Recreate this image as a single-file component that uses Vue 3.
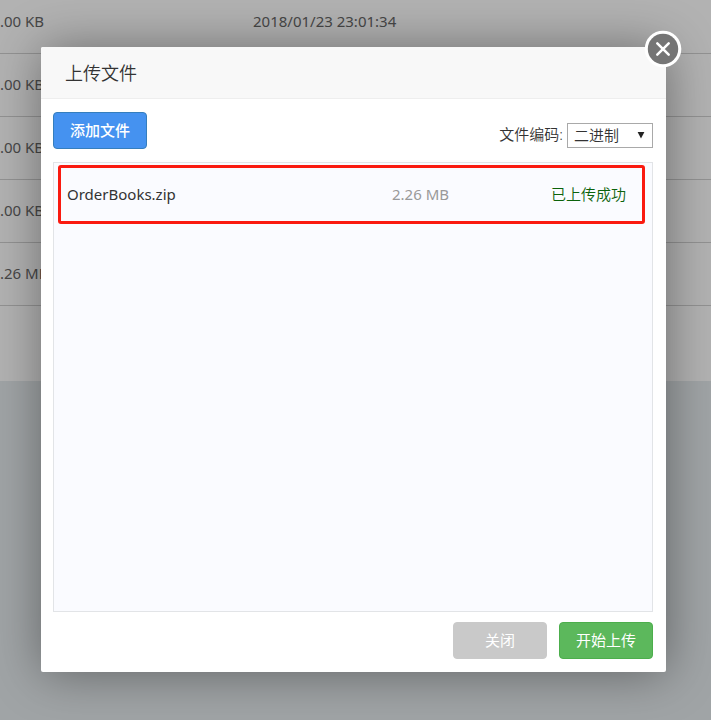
<script setup>
import { ref } from 'vue'

const rows = [
  { size: '.00 KB', time: '2018/01/23 23:01:34' },
  { size: '.00 KB', time: '2018/01/23 23:01:34' },
  { size: '.00 KB', time: '2018/01/23 23:01:34' },
  { size: '.00 KB', time: '2018/01/23 23:01:34' },
  { size: '.26 MB', time: '2018/01/23 23:01:34' },
]

const uploads = [{ name: 'OrderBooks.zip', size: '2.26 MB', status: '已上传成功' }]
const encoding = ref('binary')
</script>

<template>
  <div class="page">
    <main class="files">
      <table class="file-table">
        <tbody>
          <tr v-for="(row, i) in rows" :key="i">
            <td class="size">{{ row.size }}</td>
            <td>{{ row.time }}</td>
          </tr>
        </tbody>
      </table>
    </main>

    <div class="overlay">
      <section class="dialog" role="dialog" aria-labelledby="dialog-title">
        <header class="dialog-head">
          <h2 id="dialog-title">上传文件</h2>
        </header>
        <button class="dismiss" type="button" aria-label="关闭">
          <svg viewBox="0 0 38 38" width="38" height="38" aria-hidden="true">
            <circle cx="19" cy="19" r="18.3" fill="#fff" />
            <circle cx="19" cy="19" r="15.2" fill="#757575" />
            <path d="M13.3 13.3 24.7 24.7M24.7 13.3 13.3 24.7" stroke="#fff" stroke-width="2.5" stroke-linecap="round" />
          </svg>
        </button>

        <div class="dialog-body">
          <div class="toolbar">
            <button class="btn btn-add" type="button">添加文件</button>
            <div class="encoding">
              <label for="encoding">文件编码:</label>
              <div class="select-box">
                <select id="encoding" v-model="encoding">
                  <option value="binary">二进制</option>
                </select>
                <svg class="arrow" viewBox="0 0 8 8" width="8" height="8" aria-hidden="true">
                  <path d="M0.6 0.9H7.4L4 7.4Z" fill="#222" />
                </svg>
              </div>
            </div>
          </div>

          <ul class="uploads">
            <li v-for="file in uploads" :key="file.name" class="upload">
              <span class="name">{{ file.name }}</span>
              <span class="amount">{{ file.size }}</span>
              <span class="status">{{ file.status }}</span>
            </li>
          </ul>

          <footer class="actions">
            <button class="btn btn-close" type="button">关闭</button>
            <button class="btn btn-start" type="button">开始上传</button>
          </footer>
        </div>
      </section>
    </div>
  </div>
</template>

<style>
body {
  margin: 0;
}
</style>

<style scoped>
.page {
  position: relative;
  min-height: 100vh;
  overflow: hidden;
  background: #a0a4a6;
  color: #333;
  font-family: "Noto Sans", "Noto Sans CJK SC", sans-serif;
  font-size: 15px;
  line-height: 24px;
}

.files {
  background: #b2b2b2;
  padding-bottom: 75px;
}

.file-table {
  width: 100%;
  table-layout: fixed;
  border-collapse: separate;
  border-spacing: 0;
  color: #474747;
}

.file-table td {
  box-sizing: border-box;
  height: 63px;
  padding: 0 0 20px;
  vertical-align: bottom;
  border-bottom: 1px solid #929292;
}

.file-table tr:first-child td {
  height: 54px;
}

.file-table .size {
  width: 253px;
}

.overlay {
  position: absolute;
  inset: 0;
  display: flex;
  padding: 47px 45px 48px 41px;
}

.dialog {
  position: relative;
  flex: 1;
  display: flex;
  flex-direction: column;
  border-radius: 2px;
  background: #fff;
  box-shadow: 1px 1px 50px rgba(0, 0, 0, 0.4);
}

.dialog-head {
  padding: 14px 24px 13px;
  border-bottom: 1px solid #eee;
  border-radius: 2px 2px 0 0;
  background: #f8f8f8;
}

.dialog-head h2 {
  margin: 0;
  font-size: 18px;
  font-weight: 350;
  line-height: 24px;
}

.dismiss {
  position: absolute;
  top: -17px;
  right: -16px;
  width: 38px;
  height: 38px;
  padding: 0;
  border: 0;
  border-radius: 50%;
  background: none;
  cursor: pointer;
}

.dismiss svg {
  display: block;
}

.dialog-body {
  flex: 1;
  display: flex;
  flex-direction: column;
  padding: 13px;
  padding-left: 12px;
}

.toolbar {
  display: flex;
  justify-content: space-between;
  align-items: flex-end;
  margin-bottom: 13px;
}

.btn {
  width: 94px;
  height: 37px;
  padding: 0 0 2px;
  border: 1px solid;
  border-radius: 4px;
  color: #fff;
  font: inherit;
  cursor: pointer;
}

.btn-add {
  border-color: #357ebd;
  background: #4592f0;
  font-weight: 500;
}

.btn-close {
  border-color: #c9c9c9;
  background: #c9c9c9;
}

.btn-start {
  border-color: #4cae4c;
  background: #5cb85c;
}

.encoding {
  display: flex;
  align-items: center;
  gap: 4px;
  margin-bottom: 1px;
  font-weight: 350;
}

.encoding label {
  padding-bottom: 2px;
}

.select-box {
  position: relative;
}

.select-box select {
  display: block;
  appearance: none;
  width: 86px;
  height: 25px;
  padding: 0 20px 2px 6px;
  border: 1px solid #a9a9a9;
  border-radius: 0;
  background: #fff;
  color: #333;
  font: inherit;
  line-height: 22px;
}

.arrow {
  position: absolute;
  top: 8px;
  right: 8px;
  pointer-events: none;
}

.uploads {
  flex: 1;
  margin: 0;
  padding: 2px 7px 2px 4px;
  border: 1px solid #e2e4e7;
  background: #fafbff;
  list-style: none;
}

.upload {
  display: grid;
  grid-template-columns: 325px 1fr auto;
  align-items: center;
  height: 51px;
  padding: 0 16px 2px 6px;
  border: 3px solid #fa1a10;
  border-radius: 3px;
}

.amount {
  color: #999;
}

.status {
  color: #0b620b;
  font-weight: 350;
}

.actions {
  display: flex;
  justify-content: flex-end;
  gap: 12px;
  margin-top: 10px;
}
</style>
